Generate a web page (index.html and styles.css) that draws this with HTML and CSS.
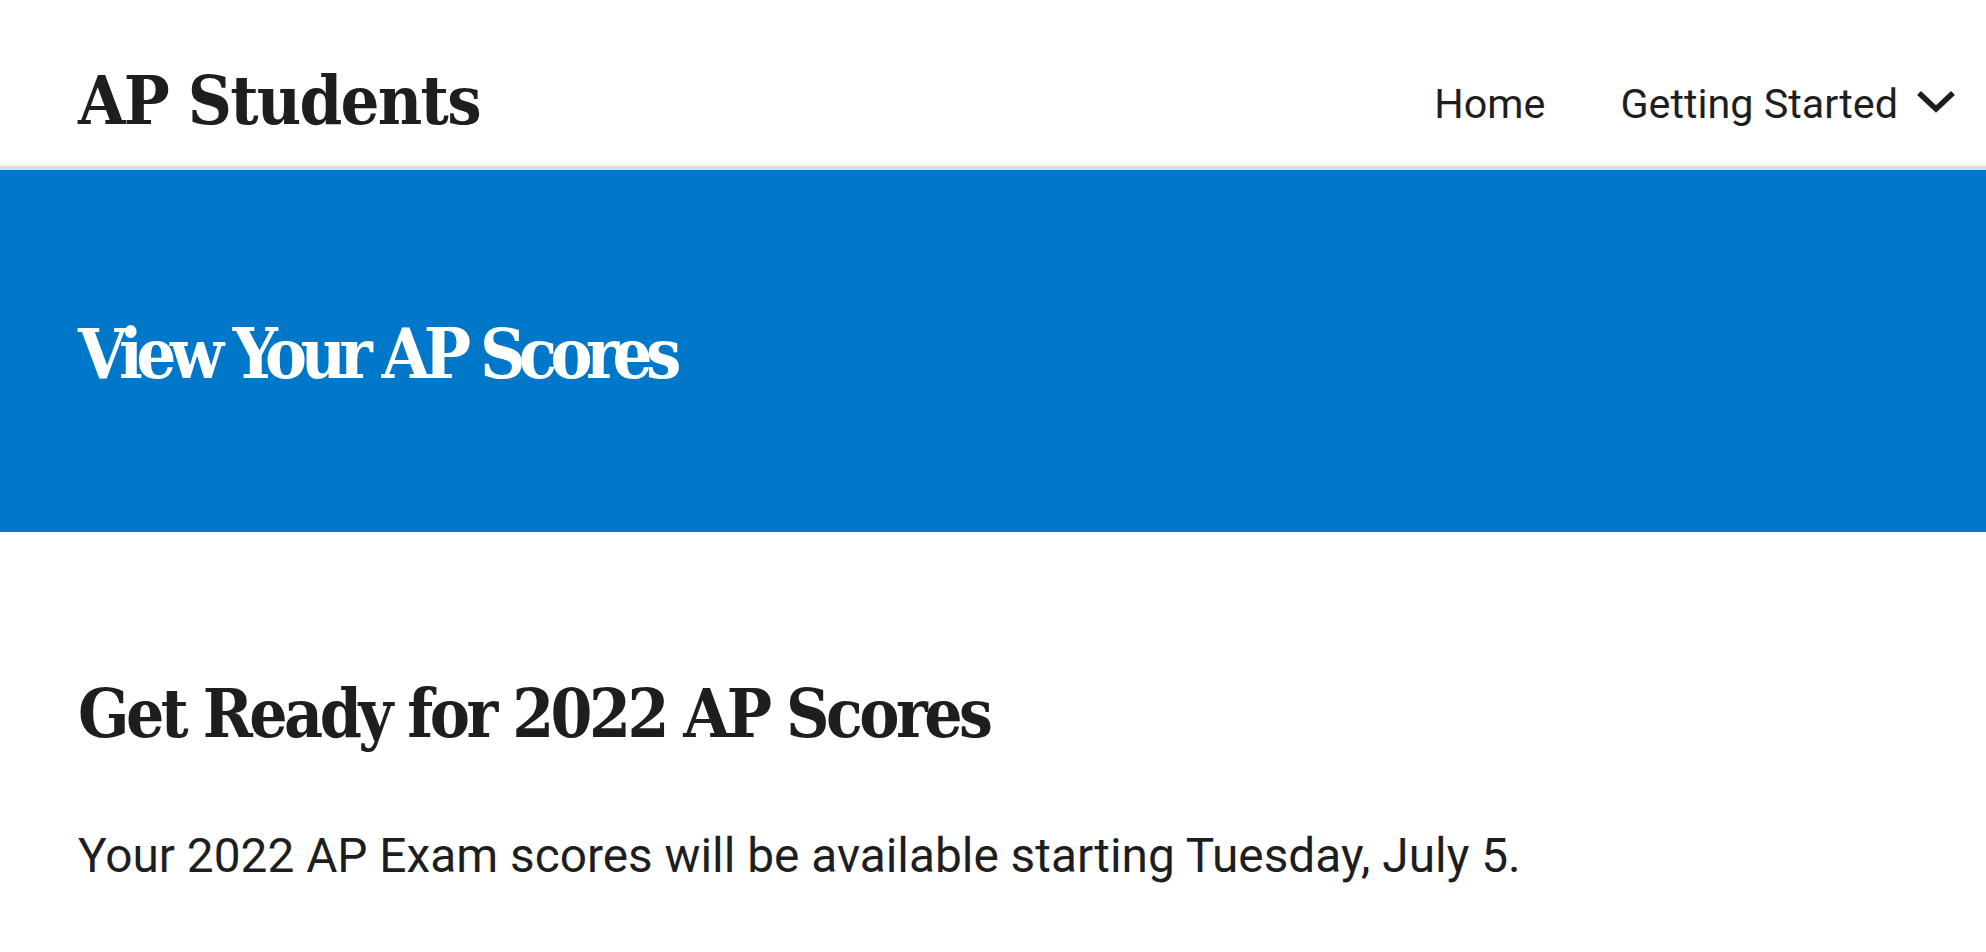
FILE: index.html
```html
<!DOCTYPE html>
<html lang="en">
<head>
<meta charset="utf-8">
<title>View Your AP Scores – AP Students</title>
<link rel="stylesheet" href="styles.css">
</head>
<body>
<header class="site-header">
  <div class="logo">AP Students</div>
  <nav class="main-nav">
    <a class="nav-link" href="#">Home</a>
    <a class="nav-link nav-dropdown" href="#">Getting Started
      <svg class="chevron" viewBox="0 0 40 24" width="40" height="24" aria-hidden="true"><path d="M3 4 L20 20 L37 4" fill="none" stroke="#1e1e1e" stroke-width="5.5"/></svg>
    </a>
  </nav>
</header>
<section class="hero">
  <h1 class="hero-title">View Your AP Scores</h1>
</section>
<main class="content">
  <h2 class="section-title">Get Ready for 2022 AP Scores</h2>
  <p class="lead">Your 2022 AP Exam scores will be available starting Tuesday, July 5.</p>
</main>
</body>
</html>
```
FILE: styles.css
```css
html, body {
  margin: 0;
  padding: 0;
  background: #ffffff;
  color: #1e1e1e;
}
body {
  min-height: 100vh;
}
.site-header {
  display: flex;
  justify-content: space-between;
  align-items: flex-start;
  height: 166px;
  padding: 0 30px 0 78px;
  border-bottom: 4px solid #dcdcdc;
  box-shadow: 0 -3px 3px -2px #f0f0f0 inset;
  background: #ffffff;
}
.logo {
  font-family: "DejaVu Serif", serif;
  font-stretch: condensed;
  font-weight: 700;
  font-size: 68px;
  line-height: 68px;
  margin-top: 66px;
  letter-spacing: -1.7px;
  color: #1e1e1e;
}
.main-nav {
  display: flex;
  align-items: flex-start;
  gap: 75px;
  margin-top: 84px;
}
.nav-link {
  font-family: Roboto, "Liberation Sans", sans-serif;
  font-size: 41.3px;
  line-height: 41px;
  color: #1e1e1e;
  text-decoration: none;
  display: flex;
  align-items: center;
}
.chevron {
  margin-left: 18px;
  margin-top: -8px;
}
.hero {
  background: #0077c8;
  height: 362px;
  box-sizing: border-box;
  padding: 149px 78px 0;
}
.hero-title {
  margin: 0;
  font-family: "DejaVu Serif", serif;
  font-stretch: condensed;
  font-weight: 700;
  font-size: 70px;
  line-height: 70px;
  letter-spacing: -6.6px;
  color: #ffffff;
}
.content {
  padding: 148px 78px 80px;
}
.section-title {
  margin: 0;
  font-family: "DejaVu Serif", serif;
  font-stretch: condensed;
  font-weight: 700;
  font-size: 67px;
  line-height: 67px;
  letter-spacing: -3.5px;
  color: #1e1e1e;
}
.lead {
  margin: 73px 0 0;
  font-family: Roboto, "Liberation Sans", sans-serif;
  font-size: 47.8px;
  line-height: 72px;
  color: #1e1e1e;
}
```
